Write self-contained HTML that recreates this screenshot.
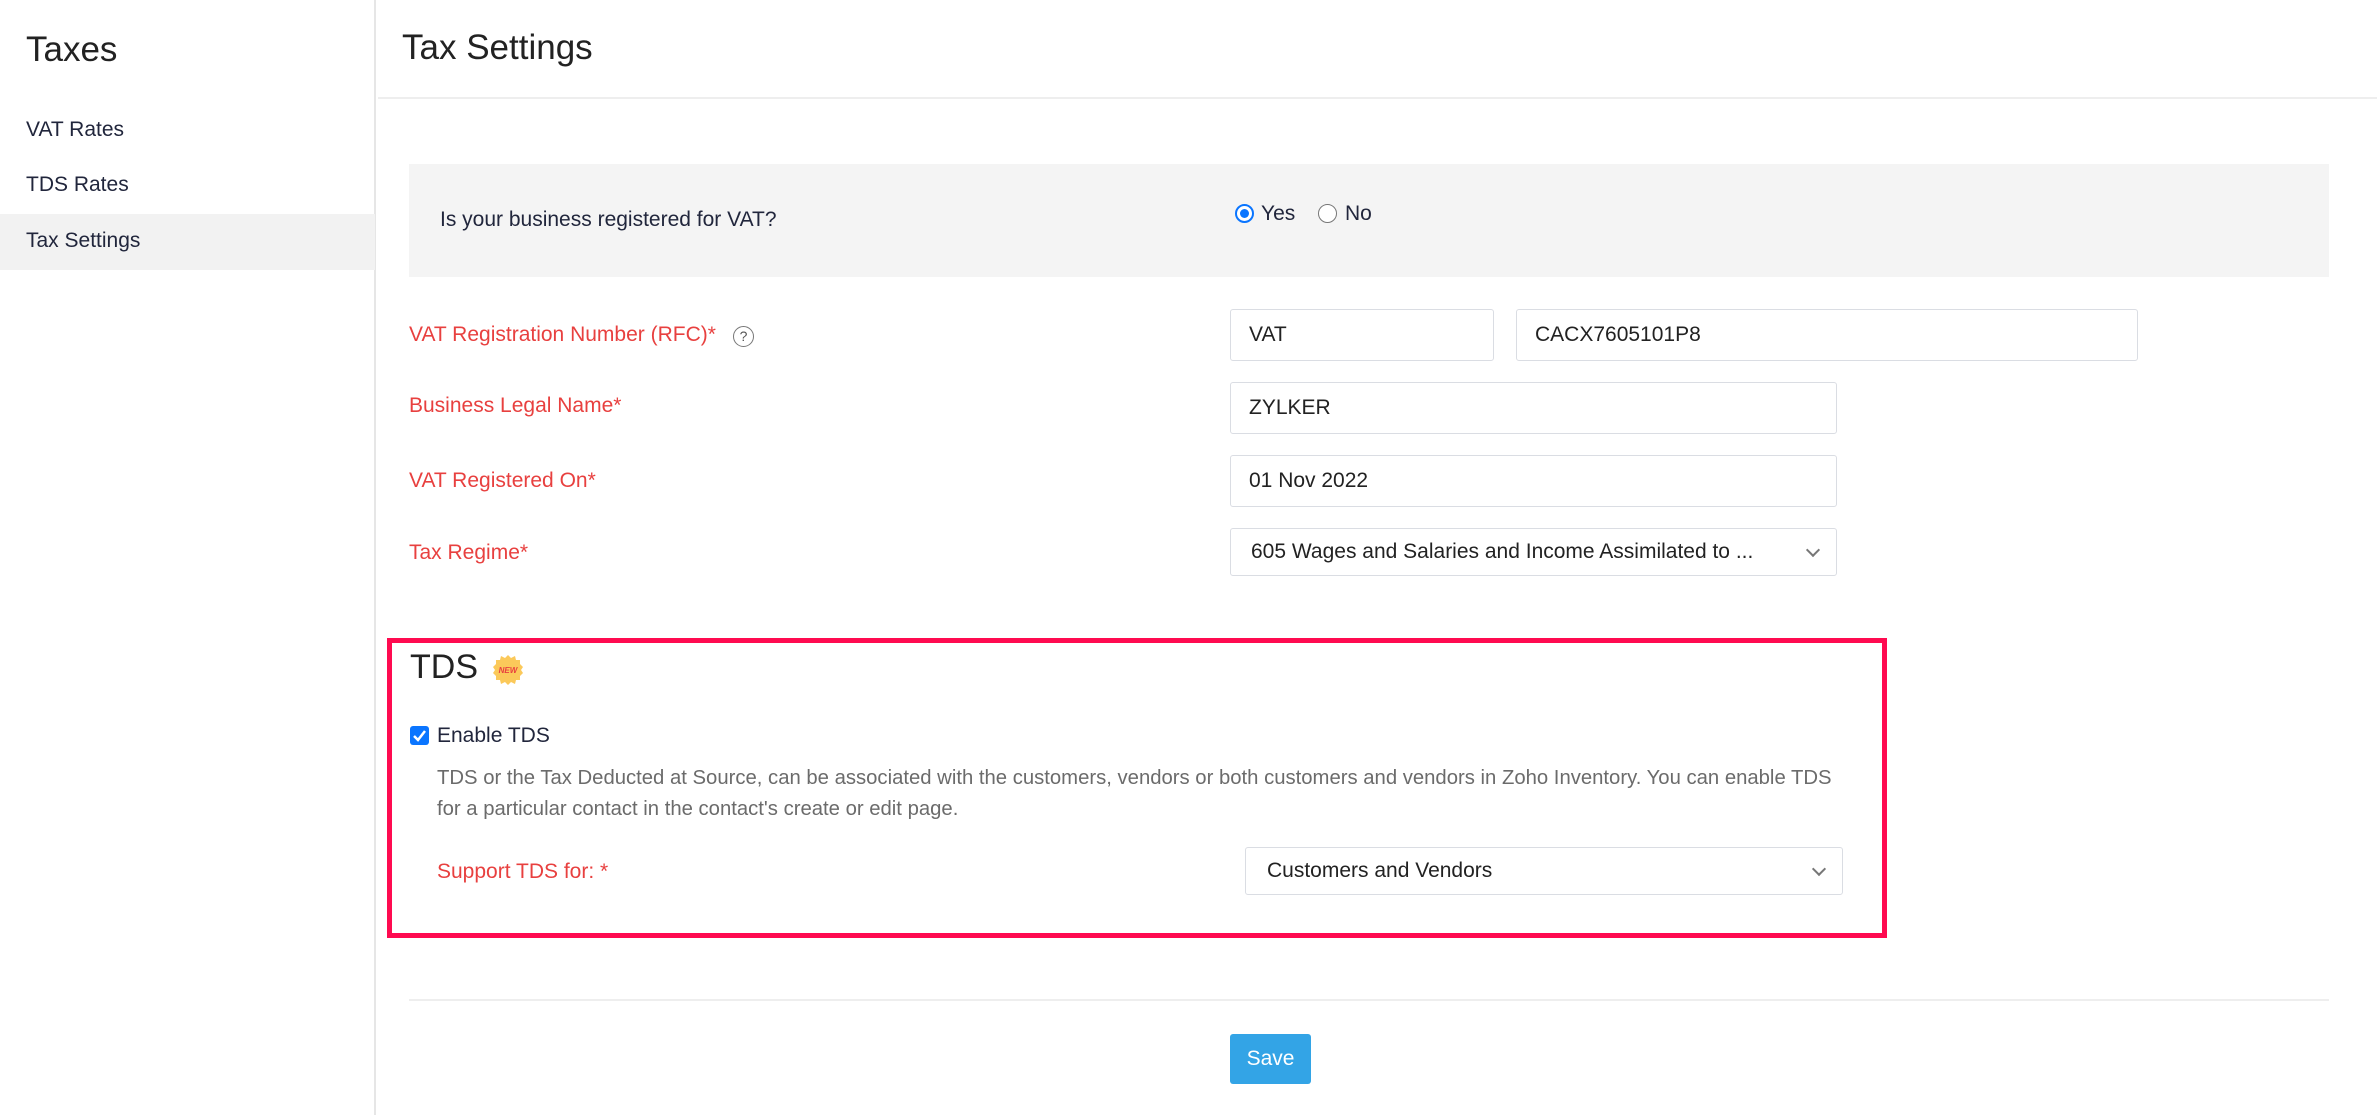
<!DOCTYPE html>
<html><head><meta charset="utf-8"><style>
*{margin:0;padding:0;box-sizing:border-box}
body{width:2377px;height:1115px;background:#fff;font-family:"Liberation Sans",sans-serif;color:#21263c;position:relative;overflow:hidden}
.a{position:absolute;white-space:nowrap}
.lbl{color:#e8403f;font-size:21px}
.inp{position:absolute;border:1.5px solid #dadde3;border-radius:3px;background:#fff;font-size:21px;color:#222;padding-left:18px;display:flex;align-items:center}
.chev{position:absolute;right:18px;top:50%;width:10px;height:10px;border-right:2px solid #777;border-bottom:2px solid #777;transform:translateY(-70%) rotate(45deg)}
</style></head><body>
<div class="a" style="left:0;top:0;width:376px;height:1115px;border-right:2px solid #e6e6e6"></div>
<div class="a" style="left:26px;top:30px;font-size:35px;color:#222">Taxes</div>
<div class="a" style="left:26px;top:118px;font-size:21px">VAT Rates</div>
<div class="a" style="left:26px;top:173px;font-size:21px">TDS Rates</div>
<div class="a" style="left:0;top:214px;width:375px;height:56px;background:#f2f2f2"></div>
<div class="a" style="left:26px;top:229px;font-size:21px">Tax Settings</div>
<div class="a" style="left:402px;top:28px;font-size:35px;color:#222">Tax Settings</div>
<div class="a" style="left:378px;top:97px;width:2000px;height:2px;background:#eeeeee"></div>

<div class="a" style="left:409px;top:164px;width:1920px;height:113px;background:#f4f4f4"></div>
<div class="a" style="left:440px;top:208px;font-size:21px">Is your business registered for VAT?</div>
<div class="a" style="left:1235px;top:204px;width:19px;height:19px;border-radius:50%;border:2px solid #0a75ff;background:#fff"><div style="position:absolute;left:3px;top:3px;width:9px;height:9px;border-radius:50%;background:#0a75ff"></div></div>
<div class="a" style="left:1261px;top:202px;font-size:21px">Yes</div>
<div class="a" style="left:1318px;top:204px;width:19px;height:19px;border-radius:50%;border:1.5px solid #777;background:#fff"></div>
<div class="a" style="left:1345px;top:202px;font-size:21px">No</div>

<div class="a lbl" style="left:409px;top:323px">VAT Registration Number (RFC)*</div>
<div class="a" style="left:733px;top:326px;width:21px;height:21px;border-radius:50%;border:1.5px solid #777;font-size:14px;color:#555;text-align:center;line-height:18px">?</div>
<div class="inp" style="left:1230px;top:309px;width:264px;height:52px">VAT</div>
<div class="inp" style="left:1516px;top:309px;width:622px;height:52px">CACX7605101P8</div>
<div class="a lbl" style="left:409px;top:394px">Business Legal Name*</div>
<div class="inp" style="left:1230px;top:382px;width:607px;height:52px">ZYLKER</div>
<div class="a lbl" style="left:409px;top:469px">VAT Registered On*</div>
<div class="inp" style="left:1230px;top:455px;width:607px;height:52px">01 Nov 2022</div>
<div class="a lbl" style="left:409px;top:541px">Tax Regime*</div>
<div class="inp" style="left:1230px;top:528px;width:607px;height:48px;padding-left:20px">605 Wages and Salaries and Income Assimilated to ...<span class="chev"></span></div>

<div class="a" style="left:387px;top:638px;width:1500px;height:300px;border:5px solid #ff0a50"></div>
<div class="a" style="left:410px;top:648px;font-size:34px;color:#222">TDS</div>
<svg class="a" style="left:492px;top:654px" width="32" height="32" viewBox="0 0 32 32"><polygon points="16,1 19,4 23,2 24,6 28,6 28,10 31,13 29,16 31,19 28,22 28,26 24,26 23,30 19,28 16,31 13,28 9,30 8,26 4,26 4,22 1,19 3,16 1,13 4,10 4,6 8,6 9,2 13,4" fill="#fbc95a"/><text x="16" y="19" font-size="8" font-style="italic" font-weight="bold" fill="#e8403f" text-anchor="middle" font-family="Liberation Sans">NEW</text></svg>
<div class="a" style="left:410px;top:726px;width:19px;height:19px;border-radius:3px;background:#0a75ff"><svg width="19" height="19" viewBox="0 0 19 19"><path d="M4 10 L8 14 L15 5" stroke="#fff" stroke-width="2.5" fill="none"/></svg></div>
<div class="a" style="left:437px;top:724px;font-size:21px">Enable TDS</div>
<div class="a" style="left:437px;top:763px;font-size:20.3px;color:#6b6b6b;line-height:31px">TDS or the Tax Deducted at Source, can be associated with the customers, vendors or both customers and vendors in Zoho Inventory. You can enable TDS<br>for a particular contact in the contact's create or edit page.</div>
<div class="a lbl" style="left:437px;top:860px">Support TDS for: *</div>
<div class="inp" style="left:1245px;top:847px;width:598px;height:48px;padding-left:21px">Customers and Vendors<span class="chev"></span></div>

<div class="a" style="left:409px;top:999px;width:1920px;height:2px;background:#eeeeee"></div>
<div class="a" style="left:1230px;top:1034px;width:81px;height:50px;border-radius:3px;background:#33a4e6;color:#fff;font-size:21px;text-align:center;line-height:50px">Save</div>
</body></html>
